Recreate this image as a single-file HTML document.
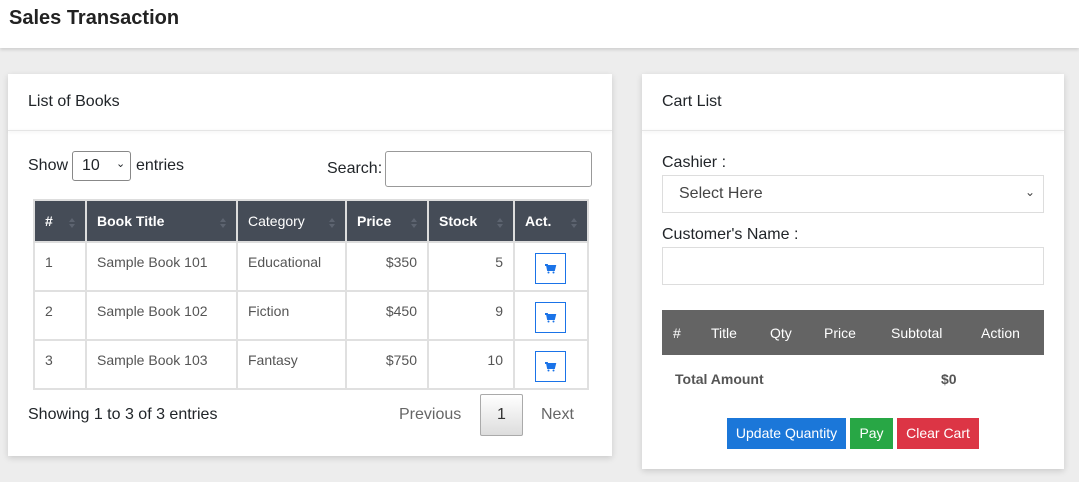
<!DOCTYPE html>
<html><head><meta charset="utf-8"><style>
body{margin:0;width:1079px;height:482px;background:#ededed;font-family:"Liberation Sans",Arial,sans-serif;position:relative;overflow:hidden;color:#212529}
.a{position:absolute}
.hdr{left:0;top:0;width:1079px;height:48px;background:#fff;box-shadow:0 2px 3px rgba(0,0,0,.12)}
.card{background:#fff;box-shadow:0 2px 6px rgba(0,0,0,.15)}
.ch{font-size:16px;color:#212529}
.line{height:1px;background:#e5e5e5;box-shadow:0 1px 3px rgba(0,0,0,.1)}
table{border-collapse:collapse;font-size:14px;table-layout:fixed}
.bt{left:33px;top:199px;width:554px}
.bt th{background:#454c57;color:#fff;text-align:left;height:42px;padding:0 10px;border:2px solid #ddd;font-weight:bold;position:relative;box-sizing:border-box}
.bt td{height:49px;padding:0 10px;border:2px solid #e0e0e0;color:#555;vertical-align:top;padding-top:11px;box-sizing:border-box}
.bt th:after{content:"";position:absolute;right:10px;top:14px;width:0;height:0;border:3px solid transparent;border-bottom:4px solid #5d6470;}
.bt th:before{content:"";position:absolute;right:10px;top:23px;border:3px solid transparent;border-top:4px solid #5d6470}
.r{text-align:right}
.cb{display:inline-block;width:31px;height:31px;border:1px solid #1a73e8;box-sizing:border-box;margin-left:10px;margin-top:-1px;position:relative}
.inp{border:1px solid #ccc;background:#fff;box-sizing:border-box}
.btn{color:#fff;font-size:14px;text-align:center;line-height:31px;height:31px;top:418px}
</style></head><body>
<div class="a hdr"><div class="a" style="left:9px;top:7px;font-size:20px;font-weight:bold;color:#222">Sales Transaction</div></div>

<div class="a card" style="left:8px;top:74px;width:604px;height:382px"></div>
<div class="a ch" style="left:28px;top:93px">List of Books</div>
<div class="a line" style="left:8px;top:130px;width:604px"></div>
<div class="a" style="left:28px;top:157px;font-size:16px">Show</div>
<div class="a inp" style="left:72px;top:151px;width:59px;height:30px;border-radius:3px;border-color:#888;font-size:16px;padding:5px 0 0 9px">10 <span style="position:absolute;left:43px;top:5px;font-size:11px">&#8964;</span></div>
<div class="a" style="left:136px;top:157px;font-size:16px">entries</div>
<div class="a" style="left:327px;top:160px;font-size:16px">Search:</div>
<div class="a inp" style="left:385px;top:151px;width:207px;height:36px;border-radius:3px;border-color:#999"></div>
<table class="a bt">
<colgroup><col style="width:52px"><col style="width:151px"><col style="width:109px"><col style="width:82px"><col style="width:86px"><col style="width:74px"></colgroup>
<tr><th>#</th><th>Book Title</th><th style="font-weight:normal">Category</th><th>Price</th><th>Stock</th><th>Act.</th></tr>
<tr><td>1</td><td>Sample Book 101</td><td>Educational</td><td class="r">$350</td><td class="r">5</td><td><span class="cb"><svg width="31" height="31" viewBox="0 0 31 31" style="position:absolute;left:-1px;top:-1px"><path d="M10 12h2l1 5h6l1-4h-7" stroke="#1a73e8" stroke-width="2" fill="#1a73e8"/><circle cx="13.5" cy="19.5" r="1" fill="#1a73e8"/><circle cx="18.5" cy="19.5" r="1" fill="#1a73e8"/></svg></span></td></tr>
<tr><td>2</td><td>Sample Book 102</td><td>Fiction</td><td class="r">$450</td><td class="r">9</td><td><span class="cb"><svg width="31" height="31" viewBox="0 0 31 31" style="position:absolute;left:-1px;top:-1px"><path d="M10 12h2l1 5h6l1-4h-7" stroke="#1a73e8" stroke-width="2" fill="#1a73e8"/><circle cx="13.5" cy="19.5" r="1" fill="#1a73e8"/><circle cx="18.5" cy="19.5" r="1" fill="#1a73e8"/></svg></span></td></tr>
<tr><td>3</td><td>Sample Book 103</td><td>Fantasy</td><td class="r">$750</td><td class="r">10</td><td><span class="cb"><svg width="31" height="31" viewBox="0 0 31 31" style="position:absolute;left:-1px;top:-1px"><path d="M10 12h2l1 5h6l1-4h-7" stroke="#1a73e8" stroke-width="2" fill="#1a73e8"/><circle cx="13.5" cy="19.5" r="1" fill="#1a73e8"/><circle cx="18.5" cy="19.5" r="1" fill="#1a73e8"/></svg></span></td></tr>
</table>
<div class="a" style="left:28px;top:406px;font-size:16px">Showing 1 to 3 of 3 entries</div>
<div class="a" style="left:399px;top:406px;font-size:16px;color:#666">Previous</div>
<div class="a" style="left:480px;top:394px;width:43px;height:42px;box-sizing:border-box;border:1px solid #aaa;border-radius:2px;background:linear-gradient(#fff,#ddd);text-align:center;line-height:40px;font-size:16px;color:#333">1</div>
<div class="a" style="left:541px;top:406px;font-size:16px;color:#666">Next</div>

<div class="a card" style="left:642px;top:74px;width:422px;height:395px"></div>
<div class="a ch" style="left:662px;top:93px">Cart List</div>
<div class="a line" style="left:642px;top:130px;width:422px"></div>
<div class="a" style="left:662px;top:154px;font-size:16px">Cashier :</div>
<div class="a inp" style="left:662px;top:175px;width:382px;height:38px;border-color:#ddd;font-size:16px;color:#444;padding:9px 0 0 16px">Select Here<span style="position:absolute;right:8px;top:9px;font-size:12px">&#8964;</span></div>
<div class="a" style="left:662px;top:226px;font-size:16px">Customer's Name :</div>
<div class="a inp" style="left:662px;top:247px;width:382px;height:38px;border-color:#ddd"></div>
<div class="a" style="left:662px;top:310px;width:382px;height:45px;background:#646464;color:#fff;font-size:14px">
<span class="a" style="left:11px;top:15px">#</span><span class="a" style="left:49px;top:15px">Title</span><span class="a" style="left:108px;top:15px">Qty</span><span class="a" style="left:162px;top:15px">Price</span><span class="a" style="left:229px;top:15px">Subtotal</span><span class="a" style="left:319px;top:15px">Action</span></div>
<div class="a" style="left:675px;top:371px;font-size:14px;font-weight:bold;color:#555">Total Amount</div>
<div class="a" style="left:941px;top:371px;font-size:14px;font-weight:bold;color:#555">$0</div>
<div class="a btn" style="left:727px;width:119px;background:#1b77d9">Update Quantity</div>
<div class="a btn" style="left:850px;width:43px;background:#28a745">Pay</div>
<div class="a btn" style="left:897px;width:82px;background:#dc3545">Clear Cart</div>
</body></html>
